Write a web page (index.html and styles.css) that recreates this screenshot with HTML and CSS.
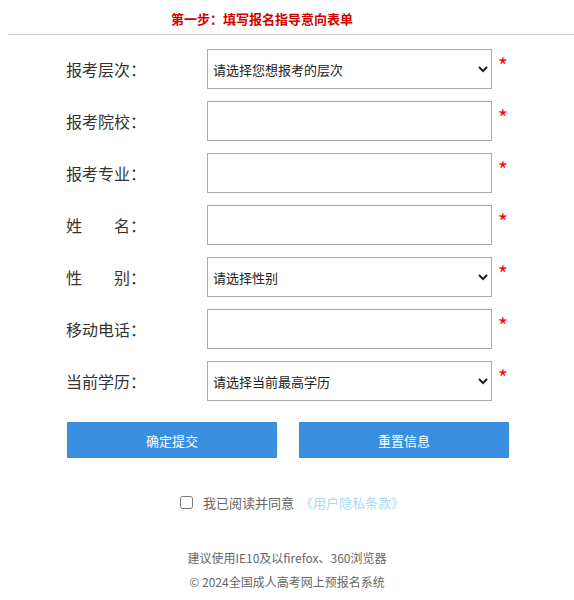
FILE: index.html
```html
<!DOCTYPE html>
<html lang="zh-CN">
<head>
    <meta charset="UTF-8">
    <meta name="viewport" content="width=device-width, initial-scale=1.0">
    <title>报名指导意向表单</title>
    <link rel="stylesheet" href="styles.css">
</head>
<body>

    <div class="step-title">第一步：填写报名指导意向表单</div>

    <form class="sign-form" id="signForm">
        <div class="row">
            <label class="lab">报考层次：</label>
            <select class="field">
                <option value="">请选择您想报考的层次</option>
                <option>高起专</option>
                <option>高起本</option>
                <option>专升本</option>
            </select>
            <span class="star">*</span>
        </div>
        <div class="row">
            <label class="lab">报考院校：</label>
            <input type="text" class="field">
            <span class="star">*</span>
        </div>
        <div class="row">
            <label class="lab">报考专业：</label>
            <input type="text" class="field">
            <span class="star">*</span>
        </div>
        <div class="row">
            <label class="lab">姓　　名：</label>
            <input type="text" class="field">
            <span class="star">*</span>
        </div>
        <div class="row">
            <label class="lab">性　　别：</label>
            <select class="field">
                <option value="">请选择性别</option>
                <option>男</option>
                <option>女</option>
            </select>
            <span class="star">*</span>
        </div>
        <div class="row">
            <label class="lab">移动电话：</label>
            <input type="text" class="field">
            <span class="star">*</span>
        </div>
        <div class="row">
            <label class="lab">当前学历：</label>
            <select class="field">
                <option value="">请选择当前最高学历</option>
                <option>高中</option>
                <option>中专</option>
                <option>大专</option>
            </select>
            <span class="star">*</span>
        </div>

        <div class="btns">
            <button type="button" class="btn">确定提交</button>
            <button type="reset" class="btn">重置信息</button>
        </div>

        <div class="agree">
            <input type="checkbox" id="agreeBox">
            <label for="agreeBox">我已阅读并同意</label>
            <a href="#" class="privacy">《用户隐私条款》</a>
        </div>
    </form>

    <div class="foot">
        <p>建议使用IE10及以firefox、360浏览器</p>
        <p>© 2024全国成人高考网上预报名系统</p>
    </div>

</body>
</html>
```

FILE: styles.css
```css
body {
    margin: 0;
    font-family: "Noto Sans CJK SC", "Noto Sans", sans-serif;
    background-color: white;
    color: #333;
}

.step-title {
    margin-left: 8px;
    padding: 11px 58px 7px 0;
    border-bottom: 1px solid #ccc;
    text-align: center;
    font-size: 13px;
    font-weight: bold;
    line-height: 16px;
    color: #d30000;
}

.sign-form {
    padding: 14px 0 0 66px;
}

.row {
    display: flex;
    align-items: flex-start;
    height: 40px;
    margin-bottom: 12px;
}

.lab {
    width: 141px;
    font-size: 16px;
    line-height: 40px;
    color: #333;
}

.field {
    width: 285px;
    height: 40px;
    box-sizing: border-box;
    border: 1px solid #aaa;
    background-color: #fff;
    padding: 0 5px;
    font-family: inherit;
    font-size: 13px;
    color: #222;
    border-radius: 0;
    outline: none;
}

select.field {
    padding: 0 1px;
}

.star {
    margin-left: 6px;
    margin-top: 6px;
    font-size: 21px;
    line-height: 21px;
    color: #f00;
}

.btns {
    display: flex;
    gap: 22px;
    margin-top: 21px;
    margin-left: 1px;
}

.btn {
    width: 210px;
    height: 36px;
    border: none;
    background-color: #3a8ee0;
    color: #fff;
    font-family: inherit;
    font-size: 13px;
    cursor: pointer;
}

.agree {
    display: flex;
    align-items: center;
    margin-top: 35px;
    margin-left: 114px;
    font-size: 13px;
    color: #666;
}

.agree input {
    width: 13px;
    height: 13px;
    margin: 0 10px 0 0;
}

.agree label {
    margin-right: 6px;
}

.privacy {
    color: #a8dcf2;
    text-decoration: none;
}

.foot {
    margin-top: 34px;
    text-align: center;
    font-size: 12px;
    color: #666;
}

.foot p {
    margin: 0;
    line-height: 24px;
}
```
